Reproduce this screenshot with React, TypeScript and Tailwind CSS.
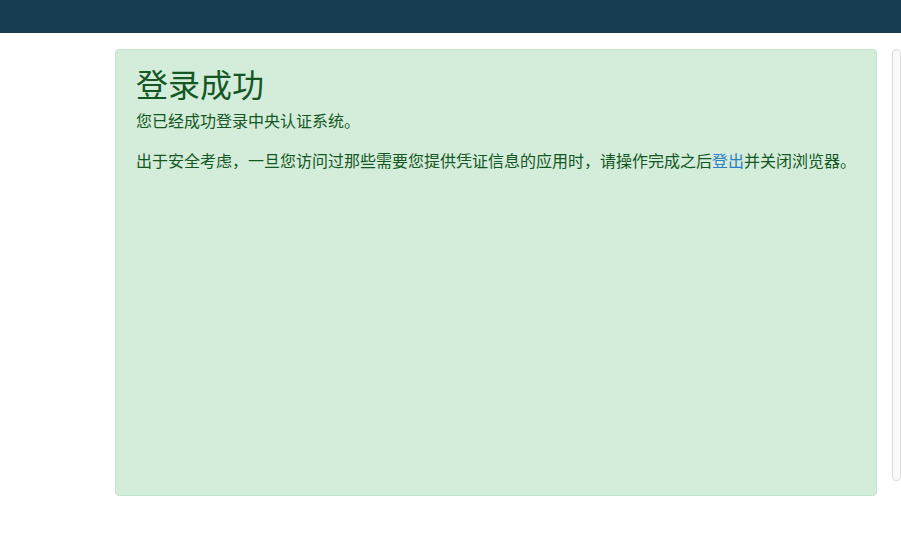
export default function App() {
  return (
    <div className="min-h-[550px] bg-white" style={{ fontFamily: '"Microsoft YaHei", "Noto Sans CJK SC", "Noto Sans", sans-serif' }}>
      <div className="h-[33px] bg-[#173d51]" />
      <div className="flex gap-[15px] pl-[115px] pt-[16px]">
        <div className="h-[447px] w-[762px] shrink-0 rounded border border-[#c3e6cb] bg-[#d4edda] pl-5 pr-2 pt-[14px] text-[#155724]">
          <h2 className="mb-[6px] text-[32px] font-normal leading-[1.2]">登录成功</h2>
          <p className="mb-4 text-base leading-6">您已经成功登录中央认证系统。</p>
          <p className="whitespace-nowrap text-base leading-6">
            出于安全考虑，一旦您访问过那些需要您提供凭证信息的应用时，请操作完成之后
            <a href="#" className="text-[#2c7fc2]">登出</a>
            并关闭浏览器。
          </p>
        </div>
        <div className="h-[432px] flex-1 rounded border border-[#dcdcdc] bg-[#f8f9fa]" />
      </div>
    </div>
  )
}
